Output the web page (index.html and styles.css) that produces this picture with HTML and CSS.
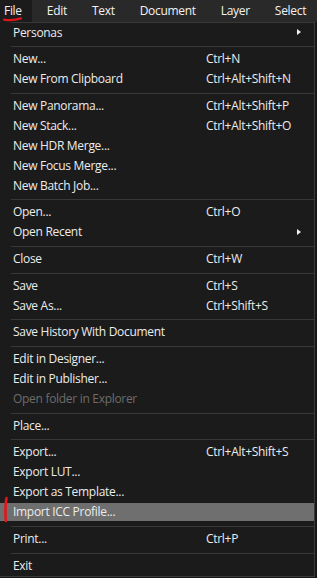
FILE: index.html
```html
<!DOCTYPE html>
<html>
<head>
<meta charset="utf-8">
<link rel="stylesheet" href="styles.css">
</head>
<body>
<div class="app">
  <nav class="menubar">
    <span class="mb-item open">File</span>
    <span class="mb-item">Edit</span>
    <span class="mb-item">Text</span>
    <span class="mb-item">Document</span>
    <span class="mb-item">Layer</span>
    <span class="mb-item">Select</span>
  </nav>
  <div class="menu">
    <div class="topline"></div>
    <div class="item"><span class="label">Personas</span><span class="arrow"></span></div>
    <div class="sep"></div>
    <div class="item"><span class="label">New...</span><span class="key">Ctrl+N</span></div>
    <div class="item"><span class="label">New From Clipboard</span><span class="key">Ctrl+Alt+Shift+N</span></div>
    <div class="sep"></div>
    <div class="item"><span class="label">New Panorama...</span><span class="key">Ctrl+Alt+Shift+P</span></div>
    <div class="item"><span class="label">New Stack...</span><span class="key">Ctrl+Alt+Shift+O</span></div>
    <div class="item"><span class="label">New HDR Merge...</span></div>
    <div class="item"><span class="label">New Focus Merge...</span></div>
    <div class="item"><span class="label">New Batch Job...</span></div>
    <div class="sep"></div>
    <div class="item"><span class="label">Open...</span><span class="key">Ctrl+O</span></div>
    <div class="item"><span class="label">Open Recent</span><span class="arrow"></span></div>
    <div class="sep"></div>
    <div class="item"><span class="label">Close</span><span class="key">Ctrl+W</span></div>
    <div class="sep"></div>
    <div class="item"><span class="label">Save</span><span class="key">Ctrl+S</span></div>
    <div class="item"><span class="label">Save As...</span><span class="key">Ctrl+Shift+S</span></div>
    <div class="sep"></div>
    <div class="item"><span class="label">Save History With Document</span></div>
    <div class="sep"></div>
    <div class="item"><span class="label">Edit in Designer...</span></div>
    <div class="item"><span class="label">Edit in Publisher...</span></div>
    <div class="item disabled"><span class="label">Open folder in Explorer</span></div>
    <div class="sep"></div>
    <div class="item"><span class="label">Place...</span></div>
    <div class="sep"></div>
    <div class="item"><span class="label">Export...</span><span class="key">Ctrl+Alt+Shift+S</span></div>
    <div class="item"><span class="label">Export LUT...</span></div>
    <div class="item"><span class="label">Export as Template...</span></div>
    <div class="item active"><span class="label">Import ICC Profile...</span></div>
    <div class="sep"></div>
    <div class="item"><span class="label">Print...</span><span class="key">Ctrl+P</span></div>
    <div class="sep"></div>
    <div class="item"><span class="label">Exit</span></div>
  </div>
  <svg class="mark mark-file" width="24" height="6" viewBox="0 0 24 6"><path d="M4 3.6 C9 4.6 15 4.2 21 2.4" fill="none" stroke="#e0161a" stroke-width="2.2" stroke-linecap="round"/></svg>
  <svg class="mark mark-import" width="8" height="28" viewBox="0 0 8 28"><path d="M5.5 2 C4.2 8 4.2 15 4.8 25" fill="none" stroke="#e0161a" stroke-width="2.6" stroke-linecap="round"/></svg>
</div>
</body>
</html>
```

FILE: styles.css
```css
html, body {
  margin: 0;
  padding: 0;
  background: #161616;
}
body {
  font-family: "Open Sans", "Noto Sans", sans-serif;
  font-size: 12px;
  letter-spacing: -0.3px;
  color: #ececec;
  width: 317px;
  height: 578px;
  overflow: hidden;
}
.app {
  position: relative;
  width: 317px;
  height: 578px;
}
.menubar {
  display: flex;
  height: 22px;
  background: #292929;
  align-items: stretch;
  white-space: nowrap;
}
.mb-item {
  display: flex;
  align-items: center;
  padding: 0 10px 1px 15px;
  color: #f2f2f2;
}
.mb-item.open {
  background: #1b1b1b;
  padding: 0 10px 1px 4px;
}
.menu {
  width: 314px;
  height: 554px;
  background: #1b1b1b;
  border-right: 1px solid #3a3a3a;
  border-bottom: 1px solid #3a3a3a;
  display: flex;
  flex-direction: column;
}
.topline {
  height: 1px;
  margin-left: 11px;
  background: #383838;
  flex: none;
}
.item {
  box-sizing: border-box;
  height: 20px;
  flex: none;
  display: flex;
  align-items: center;
  padding: 0 0 2px 13px;
  white-space: nowrap;
}
.label {
  width: 193px;
}
.key {
  color: #ececec;
}
.arrow {
  margin-left: 91px;
  width: 0;
  height: 0;
  border-left: 4px solid #f0f0f0;
  border-top: 3.5px solid transparent;
  border-bottom: 3.5px solid transparent;
}
.item.disabled {
  color: #6c6c6c;
}
.item.active {
  background: linear-gradient(#6f6f6f, #6f6f6f) top left / 100% 18px no-repeat;
}
.sep {
  height: 6.67px;
  flex: none;
}
.sep::after {
  content: "";
  display: block;
  margin-top: 3px;
  margin-left: 11px;
  height: 1px;
  background: #383838;
}
.mark {
  position: absolute;
}
.mark-file {
  left: 0;
  top: 16px;
}
.mark-import {
  left: 1px;
  top: 496px;
}
```
